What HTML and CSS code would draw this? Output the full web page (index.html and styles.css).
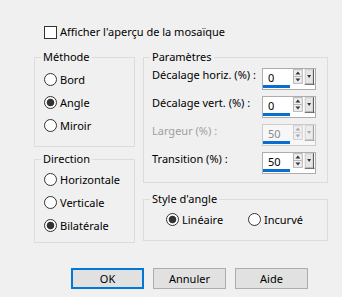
FILE: index.html
```html
<!DOCTYPE html>
<html lang="fr">
<head>
<meta charset="utf-8">
<link rel="stylesheet" href="styles.css">
</head>
<body>
<div class="dialog">
  <label class="check-row"><span class="checkbox"></span><span>Afficher l'aperçu de la mosaïque</span></label>
  <div class="columns">
    <div class="col-left">
      <fieldset class="group methode">
        <legend>Méthode</legend>
        <div class="radios">
          <div class="opt"><span class="radio"></span>Bord</div>
          <div class="opt"><span class="radio on"></span>Angle</div>
          <div class="opt"><span class="radio"></span>Miroir</div>
        </div>
      </fieldset>
      <fieldset class="group direction">
        <legend>Direction</legend>
        <div class="radios">
          <div class="opt"><span class="radio"></span>Horizontale</div>
          <div class="opt"><span class="radio"></span>Verticale</div>
          <div class="opt"><span class="radio on"></span>Bilatérale</div>
        </div>
      </fieldset>
    </div>
    <div class="col-right">
      <fieldset class="group params">
        <legend>Paramètres</legend>
        <div class="param-rows">
          <div class="prow"><span class="plabel">Décalage horiz. (%) :</span>
            <div class="spin"><div class="field">0</div>
              <svg class="arrows" width="22" height="16" viewBox="0 0 22 16"><rect x="0.5" y="0.5" width="9" height="14" fill="#f0f0f0" stroke="#b4b4b4"/><line x1="1" y1="7.5" x2="9" y2="7.5" stroke="#b4b4b4"/><polygon points="2.5,5.5 7.5,5.5 5,2.5" fill="#333"/><polygon points="2.5,9.5 7.5,9.5 5,12.5" fill="#333"/><rect x="12.5" y="0.5" width="8" height="14" fill="#e6e6e6" stroke="#c8c8c8"/><line x1="21" y1="0" x2="21" y2="16" stroke="#555"/><line x1="12" y1="15.5" x2="22" y2="15.5" stroke="#555"/><polygon points="14.5,6 18.5,6 16.5,9" fill="#333"/></svg>
            </div>
          </div>
          <div class="prow"><span class="plabel">Décalage vert. (%) :</span>
            <div class="spin"><div class="field">0</div>
              <svg class="arrows" width="22" height="16" viewBox="0 0 22 16"><rect x="0.5" y="0.5" width="9" height="14" fill="#f0f0f0" stroke="#b4b4b4"/><line x1="1" y1="7.5" x2="9" y2="7.5" stroke="#b4b4b4"/><polygon points="2.5,5.5 7.5,5.5 5,2.5" fill="#333"/><polygon points="2.5,9.5 7.5,9.5 5,12.5" fill="#333"/><rect x="12.5" y="0.5" width="8" height="14" fill="#e6e6e6" stroke="#c8c8c8"/><line x1="21" y1="0" x2="21" y2="16" stroke="#555"/><line x1="12" y1="15.5" x2="22" y2="15.5" stroke="#555"/><polygon points="14.5,6 18.5,6 16.5,9" fill="#333"/></svg>
            </div>
          </div>
          <div class="prow disabled"><span class="plabel">Largeur (%) :</span>
            <div class="spin"><div class="field">50</div>
              <svg class="arrows" width="22" height="16" viewBox="0 0 22 16"><rect x="0.5" y="0.5" width="9" height="14" fill="#f0f0f0" stroke="#cfcfcf"/><line x1="1" y1="7.5" x2="9" y2="7.5" stroke="#cfcfcf"/><polygon points="2.5,5.5 7.5,5.5 5,2.5" fill="#a8a8a8"/><polygon points="2.5,9.5 7.5,9.5 5,12.5" fill="#a8a8a8"/><rect x="12.5" y="0.5" width="8" height="14" fill="#ececec" stroke="#d4d4d4"/><line x1="21" y1="0" x2="21" y2="16" stroke="#a0a0a0"/><line x1="12" y1="15.5" x2="22" y2="15.5" stroke="#a0a0a0"/><polygon points="14.5,6 18.5,6 16.5,9" fill="#a8a8a8"/></svg>
            </div>
          </div>
          <div class="prow"><span class="plabel">Transition (%) :</span>
            <div class="spin"><div class="field">50</div>
              <svg class="arrows" width="22" height="16" viewBox="0 0 22 16"><rect x="0.5" y="0.5" width="9" height="14" fill="#f0f0f0" stroke="#b4b4b4"/><line x1="1" y1="7.5" x2="9" y2="7.5" stroke="#b4b4b4"/><polygon points="2.5,5.5 7.5,5.5 5,2.5" fill="#333"/><polygon points="2.5,9.5 7.5,9.5 5,12.5" fill="#333"/><rect x="12.5" y="0.5" width="8" height="14" fill="#e6e6e6" stroke="#c8c8c8"/><line x1="21" y1="0" x2="21" y2="16" stroke="#555"/><line x1="12" y1="15.5" x2="22" y2="15.5" stroke="#555"/><polygon points="14.5,6 18.5,6 16.5,9" fill="#333"/></svg>
            </div>
          </div>
        </div>
      </fieldset>
      <fieldset class="group style">
        <legend>Style d'angle</legend>
        <div class="hradios">
          <div class="opt wide"><span class="radio on"></span>Linéaire</div>
          <div class="opt"><span class="radio"></span>Incurvé</div>
        </div>
      </fieldset>
    </div>
  </div>
  <div class="buttons">
    <button class="btn default">OK</button>
    <button class="btn">Annuler</button>
    <button class="btn">Aide</button>
  </div>
</div>
</body>
</html>
```

FILE: styles.css
```css
html, body {
  margin: 0;
  padding: 0;
  background: #f0f0f0;
}
body {
  font-family: "Noto Sans", "Open Sans", sans-serif;
  font-size: 11px;
  line-height: 16px;
  color: #000;
  width: 342px;
  height: 297px;
  overflow: hidden;
}
.dialog {
  padding: 24px 0 0 34px;
}
.check-row {
  display: flex;
  align-items: center;
  gap: 2px;
  margin-left: 10px;
  height: 16px;
  white-space: nowrap;
}
.checkbox {
  width: 11px;
  height: 11px;
  border: 1px solid #333;
  background: #fff;
  margin-right: 1px;
}
.columns {
  display: flex;
  gap: 8px;
  margin-top: 9px;
}
.col-left {
  width: 101px;
  display: flex;
  flex-direction: column;
  gap: 4px;
}
.col-right {
  width: 185px;
  display: flex;
  flex-direction: column;
  gap: 8px;
}
.group {
  margin: 0;
  padding: 0;
  border: 1px solid #dcdcdc;
  min-width: 0;
}
.group legend {
  margin-left: 6px;
  padding: 0 2px;
  line-height: 16px;
  white-space: nowrap;
}
.radios {
  display: flex;
  flex-direction: column;
  padding: 3px 0 9px 9px;
}
.direction .radios {
  padding-top: 1px;
  padding-bottom: 5px;
}
.opt {
  height: 23px;
  display: flex;
  align-items: center;
  white-space: nowrap;
}
.radio {
  width: 11px;
  height: 11px;
  border: 1px solid #333;
  border-radius: 50%;
  background: #fff;
  margin-right: 3px;
  flex: none;
}
.radio.on {
  background: radial-gradient(circle, #333 0, #333 3.4px, #fff 4.2px);
}
.param-rows {
  display: flex;
  flex-direction: column;
  gap: 6px;
  padding: 3px 11px 8px 8px;
}
.prow {
  display: flex;
  justify-content: space-between;
  align-items: flex-start;
  height: 22px;
  white-space: nowrap;
}
.plabel {
  margin-top: -1px;
}
.prow.disabled .plabel {
  color: #a0a0a0;
}
.spin {
  width: 52px;
  height: 20px;
  border: 1px solid #adadad;
  background: #fff;
  display: flex;
  align-items: flex-start;
}
.prow.disabled .spin {
  background: #f7f7f7;
  border-color: #cccccc;
}
.field {
  width: 28px;
  border-bottom: 3px solid #0a6ed1;
  padding-left: 5px;
  box-sizing: border-box;
  height: 19px;
  line-height: 16px;
  padding-top: 1px;
  color: #000;
}
.prow.disabled .field {
  color: #8a8a8a;
}
.arrows {
  display: block;
  margin: 0 0 0 3px;
}
.style {
  height: 50px;
  box-sizing: border-box;
}
.hradios {
  display: flex;
  padding: 1px 0 9px 22px;
}
.opt.wide {
  width: 82px;
}
.buttons {
  display: flex;
  gap: 9px;
  margin: 25px 0 0 37px;
}
.btn {
  width: 73px;
  height: 21px;
  font-family: inherit;
  font-size: 11px;
  line-height: 16px;
  color: #000;
  background: #e1e1e1;
  border: 1px solid #adadad;
  padding: 0;
  margin: 0;
}
.btn.default {
  border: 2px solid #0078d7;
}
```
